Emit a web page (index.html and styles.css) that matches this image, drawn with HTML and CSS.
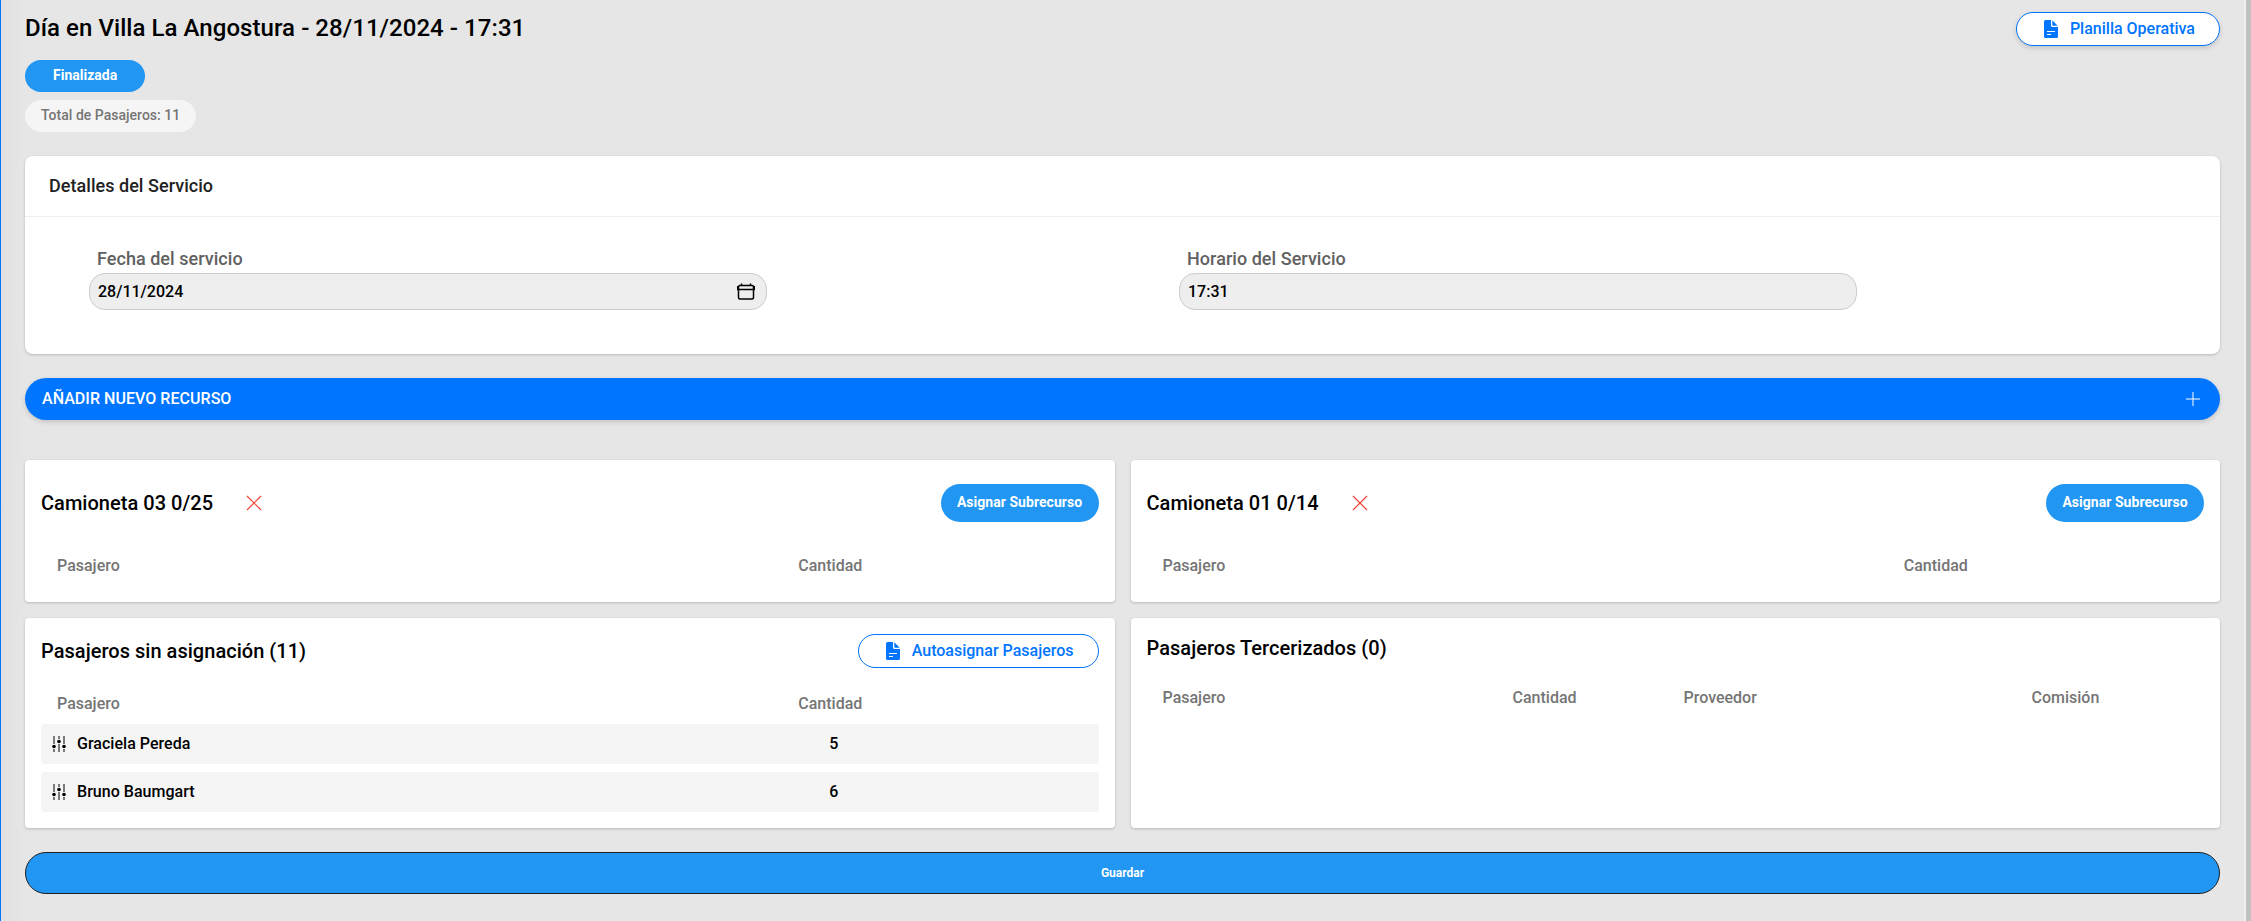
FILE: index.html
```
<!DOCTYPE html>
<html lang="es">
<head>
    <meta charset="UTF-8">
    <meta name="viewport" content="width=device-width, initial-scale=1.0">
    <title>Día en Villa La Angostura</title>
    <link rel="stylesheet" href="styles.css">
</head>
<body>
    <main class="page">
        <header class="page-header">
            <div class="header-info">
                <h1>Día en Villa La Angostura - 28/11/2024 - 17:31</h1>
                <span class="badge badge-status">Finalizada</span>
                <span class="badge badge-total">Total de Pasajeros: 11</span>
            </div>
            <button class="btn-outline btn-shadow">
                <svg class="icon-doc" viewBox="0 0 14 18"><path d="M1.500 0H7v5.500Q7 7 8.500 7H14v9.500Q14 18 12.500 18h-11Q0 18 0 16.500v-15Q0 0 1.500 0z"/><path d="M8.300 .3 13.700 5.700H9Q8.300 5.700 8.300 5z"/><path class="doc-line" d="M3 11.500h8M3 14.500h4"/></svg>
                Planilla Operativa
            </button>
        </header>

        <section class="card details">
            <h2>Detalles del Servicio</h2>
            <div class="fields">
                <div class="field">
                    <label>Fecha del servicio</label>
                    <div class="input">
                        <span>28/11/2024</span>
                        <svg class="icon-calendar" viewBox="0 0 18 18"><rect x="1.500" y="2.500" width="15" height="13.500" rx="1.500"/><path d="M.5 3v3.500h17V3M4.500 .5v2M13.500 .5v2"/></svg>
                    </div>
                </div>
                <div class="field">
                    <label>Horario del Servicio</label>
                    <div class="input"><span>17:31</span></div>
                </div>
            </div>
        </section>

        <button class="btn-add">
            <span>AÑADIR NUEVO RECURSO</span>
            <svg class="icon-plus" viewBox="0 0 14 14"><path d="M7 0v14M0 7h14"/></svg>
        </button>

        <div class="grid">
            <section class="card resource">
                <div class="card-head">
                    <h3>Camioneta 03 0/25</h3>
                    <svg class="icon-close" viewBox="0 0 16 16"><path d="M1 1l14 14M15 1L1 15"/></svg>
                    <button class="btn-sub">Asignar Subrecurso</button>
                </div>
                <div class="row row-head"><span>Pasajero</span><span class="qty">Cantidad</span></div>
            </section>
            <section class="card resource">
                <div class="card-head">
                    <h3>Camioneta 01 0/14</h3>
                    <svg class="icon-close" viewBox="0 0 16 16"><path d="M1 1l14 14M15 1L1 15"/></svg>
                    <button class="btn-sub">Asignar Subrecurso</button>
                </div>
                <div class="row row-head"><span>Pasajero</span><span class="qty">Cantidad</span></div>
            </section>
            <section class="card passengers">
                <div class="card-head">
                    <h3>Pasajeros sin asignación (11)</h3>
                    <button class="btn-outline">
                        <svg class="icon-doc" viewBox="0 0 14 18"><path d="M1.500 0H7v5.500Q7 7 8.500 7H14v9.500Q14 18 12.500 18h-11Q0 18 0 16.500v-15Q0 0 1.500 0z"/><path d="M8.300 .3 13.700 5.700H9Q8.300 5.700 8.300 5z"/><path class="doc-line" d="M3 11.500h8M3 14.500h4"/></svg>
                        Autoasignar Pasajeros
                    </button>
                </div>
                <div class="row row-head"><span>Pasajero</span><span class="qty">Cantidad</span></div>
                <div class="row row-item">
                    <span class="name">
                        <svg class="icon-sliders" viewBox="0 0 14 16"><path d="M2 0v8M2 13v3M7 0v3M7 8v8M12 0v8M12 13v3"/><circle cx="2" cy="10.500" r="1.800"/><circle cx="7" cy="5.500" r="1.800"/><circle cx="12" cy="10.500" r="1.800"/></svg>
                        Graciela Pereda
                    </span>
                    <span class="qty">5</span>
                </div>
                <div class="row row-item">
                    <span class="name">
                        <svg class="icon-sliders" viewBox="0 0 14 16"><path d="M2 0v8M2 13v3M7 0v3M7 8v8M12 0v8M12 13v3"/><circle cx="2" cy="10.500" r="1.800"/><circle cx="7" cy="5.500" r="1.800"/><circle cx="12" cy="10.500" r="1.800"/></svg>
                        Bruno Baumgart
                    </span>
                    <span class="qty">6</span>
                </div>
            </section>
            <section class="card outsourced">
                <h3>Pasajeros Tercerizados (0)</h3>
                <div class="row-outsourced">
                    <span>Pasajero</span>
                    <span>Cantidad</span>
                    <span>Proveedor</span>
                    <span>Comisión</span>
                </div>
            </section>
        </div>

        <button class="btn-save">Guardar</button>
    </main>
    <div class="scrollbar"></div>
</body>
</html>
```
FILE: styles.css
```
* {
    box-sizing: border-box;
}
body {
    display: flex;
    height: 921px;
    margin: 0;
    overflow: hidden;
    font-family: Roboto, sans-serif;
    font-weight: 500;
    color: #000;
    background-color: #e6e6e6;
}
h1, h2, h3 {
    margin: 0;
    font-weight: 500;
}
button {
    font-family: inherit;
    font-weight: 500;
    cursor: pointer;
}
svg {
    flex: none;
    fill: none;
}
.page {
    flex: 1;
    padding: 12px 24px 0;
    border-left: 1px solid #0075ff;
    background: linear-gradient(to right, #e0e0e0, #e6e6e6 22px);
}
.scrollbar {
    width: 7px;
    border-left: 2px solid #f0f0f0;
    background-color: #c1c1c1;
}

/* Header */
.page-header {
    display: flex;
    justify-content: space-between;
    align-items: flex-start;
    height: 144px;
}
.header-info {
    display: flex;
    flex-direction: column;
    align-items: flex-start;
    gap: 8px;
}
h1 {
    height: 40px;
    font-size: 24px;
    line-height: 33px;
    letter-spacing: 0.06px;
}
.badge {
    height: 32px;
    border-radius: 16px;
    font-size: 14px;
    line-height: 30px;
}
.badge-status {
    padding: 0 28px;
    color: #fff;
    background-color: #2196f3;
    font-weight: 700;
}
.badge-total {
    padding: 0 16px;
    color: #757575;
    background-color: #f5f5f5;
    letter-spacing: 0.02px;
}
.btn-outline {
    display: flex;
    align-items: center;
    height: 34px;
    padding: 0 24px 2px;
    border: 1px solid #0075ff;
    border-radius: 17px;
    color: #0075ff;
    background-color: #fff;
    font-size: 16px;
}
.btn-shadow {
    box-shadow: 0 2px 5px rgba(0, 0, 0, 0.15);
}
.icon-doc {
    width: 14px;
    height: 18px;
    margin: 2px 12px 0 3px;
    fill: #0075ff;
}
.doc-line {
    stroke: #fff;
}

/* Cards */
.card {
    border-radius: 4px;
    background-color: #fff;
    box-shadow: 0 1px 3px rgba(0, 0, 0, 0.2);
}
.details {
    height: 198px;
    border-radius: 8px;
}
.details h2 {
    height: 61px;
    padding-left: 24px;
    border-bottom: 1px solid #eee;
    color: #212121;
    font-size: 18px;
    line-height: 59px;
    letter-spacing: 0.04px;
}
.fields {
    display: grid;
    grid-template-columns: 678px 678px;
    column-gap: 412px;
    padding: 29px 0 0 64px;
}
.field label {
    display: block;
    margin-bottom: 2px;
    padding-left: 8px;
    color: #616161;
    font-size: 18px;
    line-height: 25px;
    letter-spacing: 0.04px;
}
.input {
    display: flex;
    justify-content: space-between;
    align-items: center;
    height: 37px;
    padding: 0 11px 0 8px;
    border: 1px solid #ccc;
    border-radius: 16px;
    background-color: #eee;
    font-size: 16px;
}
.icon-calendar {
    width: 18px;
    height: 18px;
    stroke: #000;
    stroke-width: 1.5;
}
.btn-add {
    display: flex;
    justify-content: space-between;
    align-items: center;
    width: 100%;
    height: 42px;
    margin: 24px 0 40px;
    padding: 0 20px 0 17px;
    border: none;
    border-radius: 21px;
    color: #fff;
    background-color: #0075ff;
    box-shadow: 0 2px 5px rgba(0, 0, 0, 0.15);
    font-size: 16px;
    letter-spacing: 0.04px;
}
.btn-add span {
    padding-bottom: 2px;
}
.icon-plus {
    width: 14px;
    height: 14px;
    stroke: #fff;
}
.grid {
    display: grid;
    grid-template-columns: 1fr 1fr;
    grid-template-rows: 142px 210px;
    gap: 16px;
}
.grid .card {
    padding: 16px;
}
.card-head {
    display: flex;
    align-items: center;
}
h3 {
    font-size: 20px;
    line-height: 28px;
    letter-spacing: 0.03px;
}
.resource .card-head {
    height: 54px;
}
.icon-close {
    width: 16px;
    height: 16px;
    margin-left: 33px;
    stroke: #f44336;
    stroke-width: 1.2;
}
.card-head button {
    margin-left: auto;
}
.btn-sub {
    width: 158px;
    height: 38px;
    padding: 0 0 2px;
    border: none;
    border-radius: 19px;
    color: #fff;
    background-color: #2196f3;
    font-size: 14px;
    font-weight: 700;
    letter-spacing: 0.04px;
}

/* Passenger lists */
.row {
    display: grid;
    grid-template-columns: 70% 15% 15%;
}
.row-head {
    color: #757575;
    font-size: 16px;
    line-height: 24px;
}
.row-head span:first-child {
    padding-left: 16px;
}
.row-head .qty {
    padding-left: 17px;
}
.resource .row-head {
    margin-top: 24px;
}
.passengers .row-head {
    margin: 24px 0 8px;
}
.row-item {
    height: 40px;
    margin-bottom: 8px;
    border-radius: 4px;
    background-color: #f5f5f5;
    font-size: 16px;
    line-height: 39px;
}
.row-item .qty {
    padding-left: 48px;
}
.name {
    display: flex;
    align-items: center;
    gap: 11px;
    height: 39px;
    padding-left: 11px;
    letter-spacing: 0.03px;
}
.icon-sliders {
    width: 14px;
    height: 16px;
    fill: #000;
    stroke: #000;
}
.icon-sliders circle {
    stroke: none;
}
.row-outsourced {
    display: grid;
    grid-template-columns: 350px 171px 348px 1fr;
    margin-top: 24px;
    padding-left: 16px;
    color: #757575;
    font-size: 16px;
    line-height: 24px;
}
.btn-save {
    width: 100%;
    height: 42px;
    margin-top: 24px;
    border: 1px solid #212121;
    border-radius: 21px;
    color: #fff;
    background-color: #2196f3;
    font-size: 12px;
    font-weight: 700;
}
```
